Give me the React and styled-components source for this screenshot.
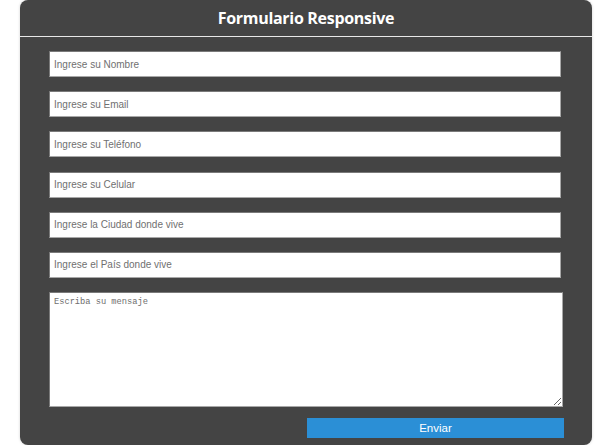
import React from "react";
import styled, { createGlobalStyle } from "styled-components";

const Global = createGlobalStyle`
  html, body { margin: 0; padding: 0; background: #ffffff; }
  body { font-family: "Liberation Sans", Arial, sans-serif; }
  * { box-sizing: border-box; }
`;

const Page = styled.div`
  padding: 0 0 0 20px;
`;

const Card = styled.div`
  width: 572px;
  height: 445px;
  background: #444444;
  border-radius: 8px;
  box-shadow: 0 0 3px rgba(0, 0, 0, 0.18);
  display: flex;
  flex-direction: column;
`;

const Header = styled.div`
  height: 37px;
  border-bottom: 1px solid #e8e8e8;
  display: flex;
  align-items: center;
  justify-content: center;
`;

const Title = styled.h1`
  margin: 0;
  color: #ffffff;
  font-family: "Open Sans", "Noto Sans", sans-serif;
  font-weight: 700;
  font-size: 16px;
  letter-spacing: -0.3px;
  padding-bottom: 1px;
`;

const Form = styled.form`
  display: flex;
  flex-direction: column;
  gap: 14.2px;
  padding: 14px 0 0 29px;
`;

const Field = styled.input`
  width: 512px;
  height: 26px;
  border: 1px solid;
  border-color: #7a7a7a #a8a8a8 #a8a8a8 #7a7a7a;
  background: #fff;
  padding: 0 4px;
  font-family: "Liberation Sans", Arial, sans-serif;
  font-size: 10px;
  outline: none;
  &::placeholder { color: #707070; }
`;

const Message = styled.textarea`
  width: 514px;
  height: 115px;
  border: 1px solid;
  border-color: #7a7a7a #a8a8a8 #a8a8a8 #7a7a7a;
  padding: 4px 4px;
  font-family: "Liberation Mono", monospace;
  font-size: 8.7px;
  outline: none;
  &::placeholder { color: #6e6e6e; }
`;

const Actions = styled.div`
  display: flex;
  justify-content: flex-end;
  width: 515px;
  margin-top: -3px;
`;

const Submit = styled.button`
  width: 257px;
  height: 20px;
  border: none;
  background: #2b8fd6;
  color: #ffffff;
  font-family: "Liberation Sans", Arial, sans-serif;
  font-size: 11.5px;
  padding: 0;
  cursor: pointer;
`;

const fields = [
  "Ingrese su Nombre",
  "Ingrese su Email",
  "Ingrese su Teléfono",
  "Ingrese su Celular",
  "Ingrese la Ciudad donde vive",
  "Ingrese el País donde vive",
];

export default function App() {
  return (
    <>
      <Global />
      <Page>
        <Card>
          <Header>
            <Title>Formulario Responsive</Title>
          </Header>
          <Form onSubmit={(e) => e.preventDefault()}>
            {fields.map((f) => (
              <Field key={f} type="text" placeholder={f} />
            ))}
            <Message placeholder="Escriba su mensaje" />
            <Actions>
              <Submit type="submit">Enviar</Submit>
            </Actions>
          </Form>
        </Card>
      </Page>
    </>
  );
}
